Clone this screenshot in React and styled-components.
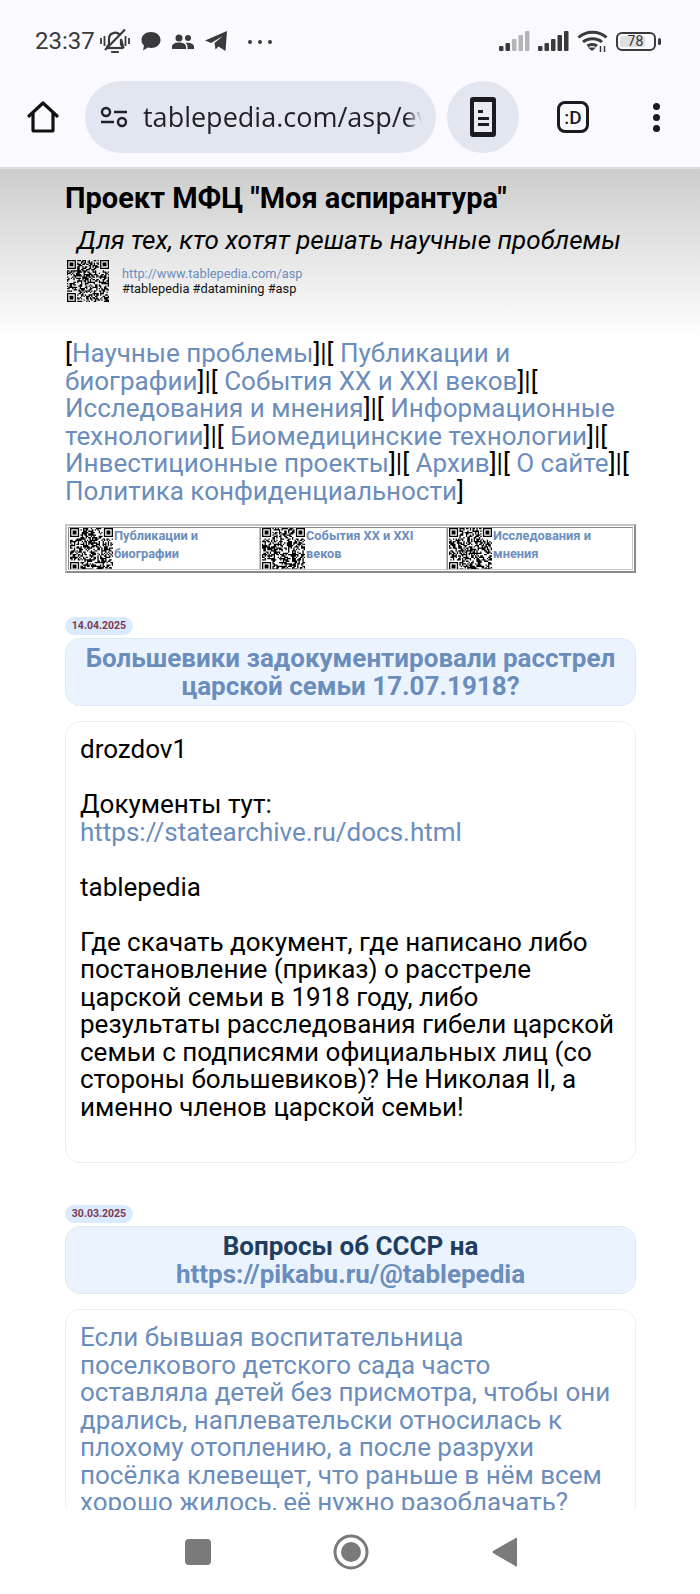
import React from "react";
import styled, { createGlobalStyle } from "styled-components";

const Global = createGlobalStyle`
  html, body { margin: 0; padding: 0; background: #fff; }
  body { font-family: Roboto, "Liberation Sans", sans-serif; }
  * { box-sizing: border-box; }
`;

const Screen = styled.div`
  width: 700px; height: 1594px; display: flex; flex-direction: column; overflow: hidden; background: #fff;
`;
const Chrome = styled.header`
  height: 169px; flex: none; background: #f9f9ff; border-bottom: 2px solid #dcdce0;
`;
const StatusBar = styled.div`
  height: 81px; display: flex; align-items: center; padding: 1px 39px 0 35px; color: #3a3a3c;
`;
const Clock = styled.span`
  font-size: 24px; width: 65px; letter-spacing: 0;
`;
const StatusGroup = styled.div`
  display: flex; align-items: center; gap: ${p => p.$gap || 11}px;
`;
const Spacer = styled.div` flex: 1; `;
const BatteryBox = styled.div`
  width: 40px; height: 19px; border: 2px solid #3a3a3c; border-radius: 6px; display: flex; align-items: center; padding: 2px; position: relative;
  margin-right: 5px;
  &::after { content: ""; position: absolute; right: -7px; top: 4px; width: 3px; height: 7px; background: #3a3a3c; border-radius: 2px; }
`;
const BatteryFill = styled.div`
  width: 78%; height: 100%; background: #dfdfe2; border-radius: 2px; display: flex; align-items: center; justify-content: center;
  font-size: 14px; color: #333; padding-left: 6px;
`;
const Toolbar = styled.div`
  height: 72px; display: flex; align-items: center; padding-left: 27px;
`;
const HomeButton = styled.div` width: 32px; height: 32px; flex: none; margin-right: 26px; `;
const UrlPill = styled.div`
  width: 351px; height: 72px; flex: none; border-radius: 36px; background: #e1e6f0; display: flex; align-items: center; padding: 0 14px 0 15px; gap: 15px;
`;
const UrlText = styled.div`
  flex: 1; overflow: hidden; white-space: nowrap; font-family: "Open Sans", Roboto, sans-serif; font-size: 27px; line-height: 36px; color: #1f2125;
  -webkit-mask-image: linear-gradient(to right, #000 94%, transparent);
  mask-image: linear-gradient(to right, #000 94%, transparent);
`;
const CircleButton = styled.div`
  width: 72px; height: 72px; flex: none; margin-left: 11px; border-radius: 50%; background: #e1e6f0; display: flex; align-items: center; justify-content: center;
`;
const SmileBox = styled.div`
  width: 32px; height: 32px; flex: none; margin-left: 38px; border: 3px solid #1b1b1f; border-radius: 8px; display: flex; align-items: center; justify-content: center;
  font-size: 19px; font-weight: 500; color: #1b1b1f;
`;
const MenuDots = styled.div`
  flex: none; margin-left: 64px; display: flex; flex-direction: column; gap: 4px;
`;
const Dot = styled.span` width: 7px; height: 7px; border-radius: 50%; background: #1b1b1f; `;

const Page = styled.main`
  flex: 1; min-height: 0; overflow: hidden; padding: 13px 64px 0 65px;
  background: linear-gradient(#cdcdcd, #fff 172px) no-repeat; background-size: 100% 172px;
  font-size: 26px; line-height: 27.5px; color: #000;
`;
const SiteTitle = styled.h1`
  margin: 0; font-size: 29px; line-height: 32px; font-weight: 700;
`;
const Motto = styled.div`
  margin: 11px 0 0 12px; font-style: italic; font-size: 26px; line-height: 30px; white-space: nowrap;
`;
const Brand = styled.div`
  display: flex; align-items: center; gap: 13px; margin: 5px 0 0 2px; height: 42px;
`;
const BrandText = styled.div` font-size: 12.8px; line-height: 15px; color: #111; `;
const Link = styled.a` color: #6b8dbc; text-decoration: none; `;
const Nav = styled.nav` margin-top: 38px; `;
const QrTable = styled.div`
  display: grid; grid-template-columns: 192px 187px 1fr; height: 49px; margin-top: 19px; padding: 1px;
  border: 2px solid; border-color: #c4c4c4 #8c8c8c #8c8c8c #c4c4c4; background: #fff;
`;
const QrCell = styled.div`
  display: flex; gap: 1px; padding: 0 12px 0 1px; border: 1px solid; border-color: #8c8c8c #c8c8c8 #c8c8c8 #8c8c8c; overflow: hidden;
`;
const QrLink = styled(Link)`
  font-size: 12.8px; line-height: 18px; font-weight: 700; margin-top: -1px;
`;
const Post = styled.article` margin-top: ${p => p.$top}px; `;
const DateBadge = styled.div`
  width: 68px; height: 18px; border-radius: 9px; background: #dbeafe; color: #7a3b50;
  font-size: 10.5px; line-height: 18px; font-weight: 700; text-align: center;
`;
const PostTitle = styled.h2`
  margin: 3px 0 0; height: 68px; padding-top: 5px; border: 1px solid #dfe9f4; border-radius: 15px; background: #ebf4fe;
  font-size: 26px; line-height: 28px; font-weight: 700; text-align: center; color: #1f3d5f;
`;
const Card = styled.div`
  margin-top: 15px; border: 1px solid #efefef; border-radius: 15px; padding: 14px 14px 0; background: #fff; min-height: ${p => p.$h || 0}px;
`;
const Gap = styled.div` height: 27.5px; `;
const BottomNav = styled.footer`
  height: 84px; flex: none; background: #fff; display: flex; align-items: flex-start; padding-top: 24px;
`;
const NavSlot = styled.div`
  flex: none; margin-left: ${p => p.$left}px; margin-top: ${p => p.$top}px; line-height: 0;
`;
const DotsSlot = styled.div` margin-left: 9px; line-height: 0; `;

function rng(seed) {
  let s = seed;
  return () => { s = (s * 1664525 + 1013904223) >>> 0; return (s >>> 16 & 255) / 255; };
}
function Qr({ size, seed }) {
  const n = 33; const r = rng(seed); let d = "";
  const finder = (x, y) => x < 8 && y < 8 || x >= n - 8 && y < 8 || x < 8 && y >= n - 8;
  const fp = (x, y) => `M${x} ${y}h7v7h-7zM${x + 1} ${y + 1}v5h5v-5zM${x + 2} ${y + 2}h3v3h-3z`;
  for (let y = 0; y < n; y++) for (let x = 0; x < n; x++) {
    const v = r();
    if (!finder(x, y) && v > 0.47) d += `M${x} ${y}h1v1h-1z`;
  }
  d += fp(0, 0) + fp(n - 7, 0) + fp(0, n - 7);
  return (
    <svg width={size} height={size} viewBox={`0 0 ${n} ${n}`} style={{ flex: "none" }}>
      <path d={d} fill="#000" fillRule="evenodd" />
    </svg>
  );
}

const MutedBell = () => (
  <svg width="30" height="26" viewBox="0 0 30 26" fill="none" stroke="#3a3a3c" strokeWidth="2.200">
    <path d="M6.500 20l2.500-3.500V11a6 6 0 0 1 11-3.500M21 11v5.500l2.500 3.500z" />
    <path d="M6.500 20h17" />
    <path d="M12 24h6" strokeLinecap="round" />
    <path d="M5 22L25 1.500" />
    <path d="M1 10v6M4.500 8v10M25.500 8v10M29 10v6" strokeWidth="1.800" />
  </svg>
);
const Bubble = () => (
  <svg width="20" height="19" viewBox="0 0 20 19"><path fill="#3a3a3c" d="M10 0c5.500 0 9.500 3.500 9.500 8s-4 8-9.500 8c-1 0-2-.1-3-.4L2 18.500l1-5C1.200 12 .5 10.200.5 8 .5 3.500 4.500 0 10 0z" /></svg>
);
const People = () => (
  <svg width="22" height="15" viewBox="0 0 22 15" fill="#3a3a3c">
    <circle cx="7" cy="4" r="3.500" /><circle cx="16" cy="4" r="3" />
    <path d="M0 15v-2.500C0 10 3.500 8.500 7 8.500s7 1.500 7 4V15z" />
    <path d="M15.500 15v-2.500c0-1.500-.7-2.700-1.800-3.500 3.500-.7 8.300.8 8.300 3.500V15z" />
  </svg>
);
const Plane = () => (
  <svg width="23" height="20" viewBox="0 0 23 20"><path fill="#3a3a3c" d="M0 9.500L22 0l-1.500 20-7-4.500-3 3-1-6.500L18 5 6 12z" /></svg>
);
const ThreeDots = () => (
  <svg width="24" height="4" viewBox="0 0 24 4" fill="#3a3a3c"><circle cx="2" cy="2" r="2" /><circle cx="12" cy="2" r="2" /><circle cx="22" cy="2" r="2" /></svg>
);
const Signal = ({ weak }) => (
  <svg width="31" height="20" viewBox="0 0 31 20">
    {[[0, 15, 5], [6.500, 12, 8], [13, 8, 12], [19.500, 4, 16], [26, 0, 20]].map(([x, y, h], i) => (
      <rect key={i} x={x} y={y} width="4.500" height={h} rx="1" fill={weak && i > 1 ? "#b4b4b8" : "#3a3a3c"} />
    ))}
  </svg>
);
const Wifi = () => (
  <svg width="31" height="22" viewBox="0 0 31 22" fill="none" stroke="#3a3a3c" strokeWidth="3">
    <path d="M1.500 7.500C9 .5 22 .5 29.500 7.500" />
    <path d="M6 12c5-4.500 14-4.500 19 0" />
    <path d="M10.500 16c2.500-2 7-2 9.500 0" />
    <path d="M15 21l-4-3.500h8z" fill="#3a3a3c" stroke="none" />
    <path d="M23.500 16v6M27.500 16v6" strokeWidth="1.500" />
  </svg>
);
const Home = () => (
  <svg width="32" height="32" viewBox="0 0 32 32" fill="none" stroke="#111" strokeWidth="3.200" strokeLinejoin="round">
    <path d="M2 15L16 2l14 13" strokeLinecap="round" />
    <path d="M6 12v17a1 1 0 0 0 1 1h18a1 1 0 0 0 1-1V12" />
  </svg>
);
const Tune = () => (
  <svg width="28" height="22" viewBox="0 0 28 22" fill="none" stroke="#1f2125" strokeWidth="2.400">
    <circle cx="6" cy="6" r="4" /><path d="M14 6h13M1 16h13" /><circle cx="22" cy="16" r="4" />
  </svg>
);
const Reader = () => (
  <svg width="26" height="40" viewBox="0 0 26 40">
    <rect width="26" height="40" rx="3" fill="#1b1b1f" />
    <rect x="4" y="5" width="18" height="30" fill="#e8ebf2" />
    <rect x="8" y="13" width="5" height="3" fill="#1b1b1f" />
    <rect x="8" y="20" width="11" height="3" fill="#1b1b1f" />
    <rect x="8" y="26" width="11" height="3" fill="#1b1b1f" />
  </svg>
);
const NavSquare = () => (
  <svg width="26" height="26" viewBox="0 0 26 26"><rect width="26" height="26" rx="4" fill="#7a7a7a" /></svg>
);
const NavCircle = () => (
  <svg width="36" height="36" viewBox="0 0 36 36">
    <circle cx="18" cy="18" r="16" fill="none" stroke="#7a7a7a" strokeWidth="3" />
    <circle cx="18" cy="18" r="10" fill="#7a7a7a" />
  </svg>
);
const NavBack = () => (
  <svg width="25" height="30" viewBox="0 0 25 30"><path d="M23 1.500a1 1 0 0 1 2 .5v26a1 1 0 0 1-2 .8L1 16a1.500 1.500 0 0 1 0-2z" fill="#7a7a7a" /></svg>
);

export default function App() {
  const navItems = ["Научные проблемы", " Публикации и биографии", " События XX и XXI веков", " Исследования и мнения", " Информационные технологии", " Биомедицинские технологии", " Инвестиционные проекты", " Архив", " О сайте", " Политика конфиденциальности"];
  return (
    <Screen>
      <Global />
      <Chrome>
        <StatusBar>
          <Clock>23:37</Clock>
          <StatusGroup $gap={11}>
            <MutedBell /><Bubble /><People /><Plane />
            <DotsSlot><ThreeDots /></DotsSlot>
          </StatusGroup>
          <Spacer />
          <StatusGroup $gap={8}>
            <Signal weak /><Signal /><Wifi /><BatteryBox><BatteryFill>78</BatteryFill></BatteryBox>
          </StatusGroup>
        </StatusBar>
        <Toolbar>
          <HomeButton><Home /></HomeButton>
          <UrlPill><Tune /><UrlText>tablepedia.com/asp/events.html</UrlText></UrlPill>
          <CircleButton><Reader /></CircleButton>
          <SmileBox>:D</SmileBox>
          <MenuDots><Dot /><Dot /><Dot /></MenuDots>
        </Toolbar>
      </Chrome>
      <Page>
        <SiteTitle>Проект МФЦ "Моя аспирантура"</SiteTitle>
        <Motto>Для тех, кто хотят решать научные проблемы</Motto>
        <Brand>
          <Qr size={42} seed={11} />
          <BrandText><Link>http://www.tablepedia.com/asp</Link><br />#tablepedia #datamining #asp</BrandText>
        </Brand>
        <Nav>
          [{navItems.map((t, i) => (
            <React.Fragment key={t}>
              {i > 0 && "]|["}{t.startsWith(" ") && " "}<Link>{t.trim()}</Link>
            </React.Fragment>
          ))}]
        </Nav>
        <QrTable>
          <QrCell><Qr size={43} seed={23} /><QrLink>Публикации и биографии</QrLink></QrCell>
          <QrCell><Qr size={43} seed={37} /><QrLink>События XX и XXI веков</QrLink></QrCell>
          <QrCell><Qr size={43} seed={51} /><QrLink>Исследования и мнения</QrLink></QrCell>
        </QrTable>
        <Post $top={44}>
          <DateBadge>14.04.2025</DateBadge>
          <PostTitle><Link>Большевики задокументировали расстрел царской семьи 17.07.1918?</Link></PostTitle>
          <Card $h={442}>
            drozdov1<Gap />
            Документы тут:<br /><Link>https://statearchive.ru/docs.html</Link><Gap />
            tablepedia<Gap />
            Где скачать документ, где написано либо постановление (приказ) о расстреле царской семьи в 1918 году, либо результаты расследования гибели царской семьи с подписями официальных лиц (со стороны большевиков)? Не Николая II, а именно членов царской семьи!
          </Card>
        </Post>
        <Post $top={42}>
          <DateBadge>30.03.2025</DateBadge>
          <PostTitle>Вопросы об СССР на<br /><Link>https://pikabu.ru/@tablepedia</Link></PostTitle>
          <Card>
            <Link>Если бывшая воспитательница поселкового детского сада часто оставляла детей без присмотра, чтобы они дрались, наплевательски относилась к плохому отоплению, а после разрухи посёлка клевещет, что раньше в нём всем хорошо жилось, её нужно разоблачать?</Link>
          </Card>
        </Post>
      </Page>
      <BottomNav>
        <NavSlot $left={185} $top={5}><NavSquare /></NavSlot>
        <NavSlot $left={122} $top={0}><NavCircle /></NavSlot>
        <NavSlot $left={123} $top={3}><NavBack /></NavSlot>
      </BottomNav>
    </Screen>
  );
}
